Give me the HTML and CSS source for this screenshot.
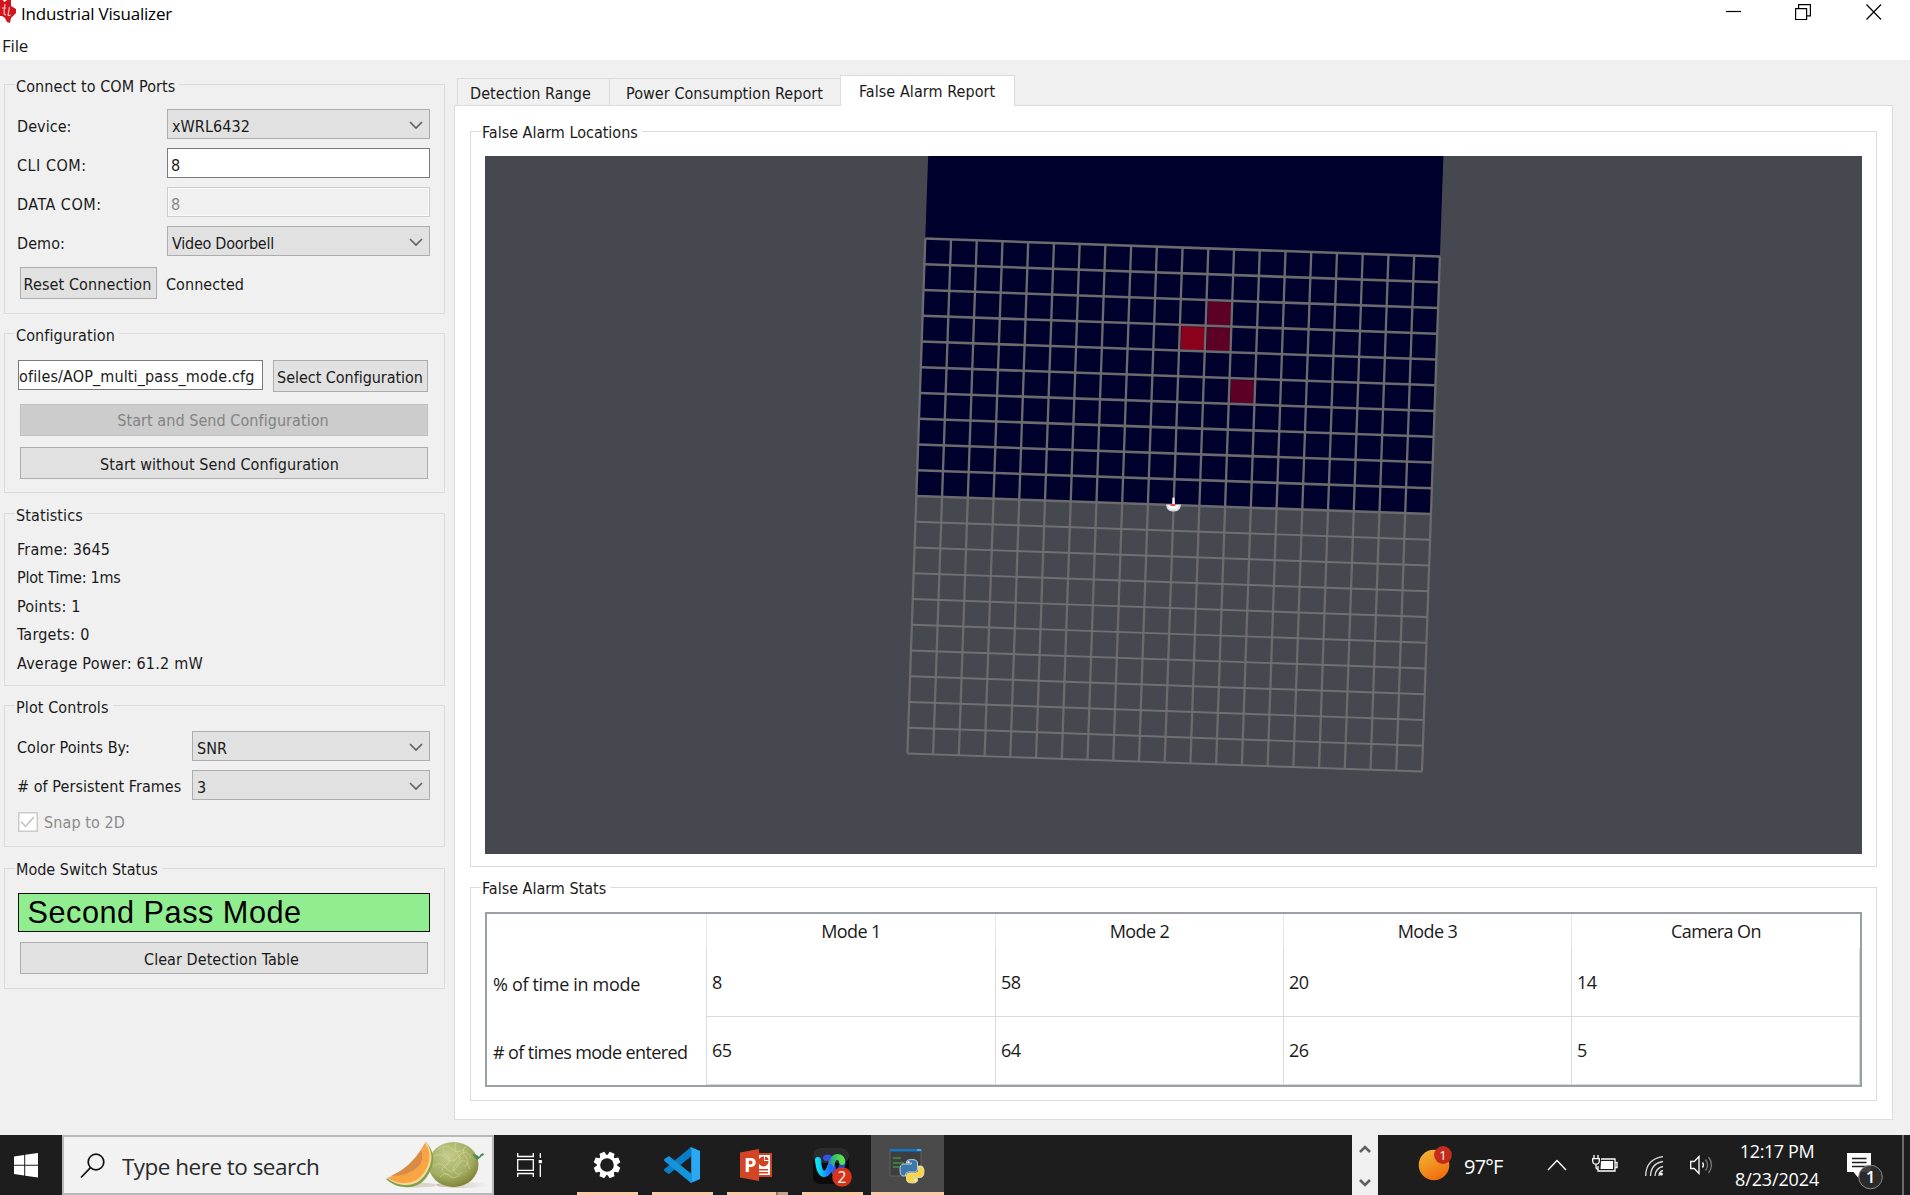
FILE: index.html
```html
<!DOCTYPE html>
<html lang="en">
<head>
<meta charset="utf-8">
<title>Industrial Visualizer</title>
<link rel="stylesheet" href="styles.css">
</head>
<body>
<header class="titlebar">
  <svg class="logo" width="17" height="25" viewBox="0 0 17 25"><path d="M0 1h3l1 2 2-1 1-1h4v6l5 3v4l-3 3-2 2-1 5-3-1-2-4-3-2H0z" fill="#d2141c"/><path d="M5 5l-1 8q0 3 2 3M2 9h4M9.500 8l-1.500 8q1 1.500 2.500-.5" fill="none" stroke="#f6c4c6" stroke-width="1.200"/></svg>
  <span class="title">Industrial Visualizer</span>
  <svg class="winctl" width="156" height="16" viewBox="0 0 156 16" fill="none" stroke="#000" stroke-width="1.2"><path d="M0 7.5h15"/><path d="M69.6 4.600h11v11h-11zM72.6 4.600v-4h11.800v11.200h-3.500"/><path d="M140.500.5l14.500 15M155 .5l-14.500 15"/></svg>
</header>
<nav class="menubar"><span>File</span></nav>

<main class="workspace">
  <aside class="sidebar">
    <section class="group ports">
      <h2>Connect to COM Ports</h2>
      <div class="form">
        <label>Device:</label><div class="select"><span>xWRL6432</span><svg width="14" height="9" viewBox="0 0 14 9"><path d="M1 1l6 6 6-6"/></svg></div>
        <label class="wide">CLI COM:</label><div class="input">8</div>
        <label class="wide">DATA COM:</label><div class="input disabled">8</div>
        <label>Demo:</label><div class="select"><span class="tight">Video Doorbell</span><svg width="14" height="9" viewBox="0 0 14 9"><path d="M1 1l6 6 6-6"/></svg></div>
      </div>
      <div class="reset"><div class="button">Reset Connection</div><span>Connected</span></div>
    </section>

    <section class="group config">
      <h2>Configuration</h2>
      <div class="file"><div class="input path"><span>ofiles/AOP_multi_pass_mode.cfg</span></div><div class="button">Select Configuration</div></div>
      <div class="button full off">Start and Send Configuration</div>
      <div class="button full without">Start without Send Configuration</div>
    </section>

    <section class="group stats">
      <h2>Statistics</h2>
      <ul><li>Frame: 3645</li><li class="time">Plot Time: 1ms</li><li>Points: 1</li><li>Targets: 0</li><li>Average Power: 61.2 mW</li></ul>
    </section>

    <section class="group plot">
      <h2>Plot Controls</h2>
      <div class="form">
        <label>Color Points By:</label><div class="select"><span>SNR</span><svg width="14" height="9" viewBox="0 0 14 9"><path d="M1 1l6 6 6-6"/></svg></div>
        <label># of Persistent Frames</label><div class="select"><span>3</span><svg width="14" height="9" viewBox="0 0 14 9"><path d="M1 1l6 6 6-6"/></svg></div>
      </div>
      <div class="check"><svg width="20" height="20" viewBox="0 0 20 20"><path d="M.75.75h18.500v18.500H.75z" fill="#fff" stroke="#cbcbcb" stroke-width="1.500"/><path d="M3 9.500l4.500 5L16 5" fill="none" stroke="#c0c0c0" stroke-width="1.500"/></svg><span>Snap to 2D</span></div>
    </section>

    <section class="group mode">
      <h2>Mode Switch Status</h2>
      <div class="status">Second Pass Mode</div>
      <div class="button full">Clear Detection Table</div>
    </section>
  </aside>

  <section class="content">
    <div class="tabs"><div class="tab t1">Detection Range</div><div class="tab t2">Power Consumption Report</div><div class="tab t3 active">False Alarm Report</div></div>
    <div class="pane">
      <section class="group locations">
        <h2>False Alarm Locations</h2>
        <svg class="scene" width="1377" height="698" viewBox="485 156 1377 698">
          <g transform="matrix(25.730 .9 -.895 25.750 925.300 238.500)">
            <path d="M0-5h20v15H0z" fill="#00002d"/>
            <path d="M11.060 2.060h.9v.9h-.9zM11.060 3.060h.9v.9h-.9zM12.060 5.060h.9v.9h-.9z" fill="#5d0025"/>
            <path d="M10.060 3.060h.9v.9h-.9z" fill="#8b001b"/>
            <g fill="none" stroke="#6b6b6e">
              <path stroke-width=".09" d="M0 0v20M1 0v20M2 0v20M3 0v20M4 0v20M5 0v20M6 0v20M7 0v20M8 0v20M9 0v20M10 0v20M11 0v20M12 0v20M13 0v20M14 0v20M15 0v20M16 0v20M17 0v20M18 0v20M19 0v20M20 0v20"/>
              <path stroke-width=".1" d="M0 0h20M0 1h20M0 2h20M0 3h20M0 4h20M0 5h20M0 6h20M0 7h20M0 8h20M0 9h20M0 10h20"/>
              <path stroke-width=".075" stroke="#707073" d="M0 11h20M0 12h20M0 13h20M0 14h20M0 15h20M0 16h20M0 17h20M0 18h20M0 19h20M0 20h20"/>
            </g>
          </g>
          <path d="M1166 504.500h6.200l.5-7h1.600l.5 7h6.200q-.5 7-7.500 7t-7.500-7z" fill="#dedee6"/>
          <path d="M1168 505h11l-2 4h-7zM1172.600 498h1.800v8h-1.800z" fill="#fff"/>
          <path d="M1170.500 504h5v2h-5z" fill="#f04a4a"/>
        </svg>
      </section>
      <section class="group report">
        <h2>False Alarm Stats</h2>
        <table>
          <colgroup><col class="c0"><col class="c1"><col class="c2"><col class="c3"><col class="c4"></colgroup>
          <tr class="head"><th></th><th>Mode 1</th><th>Mode 2</th><th>Mode 3</th><th>Camera On</th></tr>
          <tr><th class="tlabel first">% of time in mode</th><td>8</td><td>58</td><td>20</td><td>14</td></tr>
          <tr><th class="tlabel"># of times mode entered</th><td>65</td><td>64</td><td>26</td><td>5</td></tr>
        </table>
      </section>
    </div>
  </section>
</main>

<footer class="taskbar">
  <div class="start"><svg width="24" height="25" viewBox="0 0 24 25"><path d="M0 3.500l10.200-1.500v9.700H0zM11.200 1.800L24 0v11.700H11.200zM0 12.700h10.200v9.700L0 21.100zM11.200 12.700H24V24.500l-12.800-1.800z" fill="#fff"/></svg></div>
  <div class="search">
    <svg width="26" height="26" viewBox="0 0 26 26" fill="none" stroke="#111" stroke-width="1.700"><circle cx="16" cy="9" r="7.800"/><path d="M10.500 14.700L1 24.500"/></svg>
    <span>Type here to search</span>
    <svg class="melon" width="104" height="50" viewBox="384 1141 104 50">
      <defs>
        <radialGradient id="rind" cx=".4" cy=".3" r=".8"><stop offset="0" stop-color="#c3cc8a"/><stop offset=".6" stop-color="#a3ac61"/><stop offset="1" stop-color="#707226"/></radialGradient>
        <linearGradient id="flesh" x1="0" y1="0" x2="1" y2="1"><stop offset="0" stop-color="#f0a04e"/><stop offset="1" stop-color="#ffa63e"/></linearGradient>
        <linearGradient id="shade"><stop offset="0" stop-color="#c9bdb0"/><stop offset="1" stop-color="#f2f2f2"/></linearGradient>
      </defs>
      <ellipse cx="462" cy="1186" rx="26" ry="3" fill="url(#shade)"/><ellipse cx="416" cy="1186" rx="20" ry="2.500" fill="#dcd3cb"/>
      <ellipse cx="453.500" cy="1165.500" rx="25" ry="22.500" fill="url(#rind)"/>
      <g fill="none" stroke="#dfe0a4" stroke-width=".9" opacity=".55"><path d="M438 1150q8-6 14 0t14-2M434 1158q6-6 12 1t13-2 12 2M433 1168q7-7 13 1t12-3 12 4M440 1178q5-6 10-1t12-4M444 1147q-3 6 3 10t-2 10 4 9M456 1144q-3 6 2 11t-2 10 3 11M465 1148q-4 5 1 10t-2 10"/></g>
      <path d="M472 1155q6 1 7 3 1-3 4-4l1 2q-3 1-4 3l-3 2z" fill="#4b8a59"/>
      <path d="M426 1143Q437 1155 431 1170Q423 1190 404 1188Q393 1187 386 1180Q411 1170 426 1143z" fill="#7fa34a"/>
      <path d="M426 1143Q435 1155 429 1169Q421 1187 404 1186Q394 1185 387 1179Q411 1170 426 1143z" fill="#f7d79a"/>
      <path d="M425 1144Q433 1155 427 1168Q420 1184 404 1184Q395 1184 388 1179Q411 1170 425 1144z" fill="url(#flesh)"/>
      <path d="M421 1151Q425 1160 418 1168Q408 1177 391 1177Q411 1168 421 1151z" fill="#d98a45"/>
    </svg>
  </div>
  <div class="item view"><svg width="26" height="24" viewBox="0 0 26 24" fill="none" stroke="#fff" stroke-width="1.300"><path d="M.7 0v3.500h15.600V0M.7 6.700h15.600v10.600H.7zM.7 24v-3.500h15.600V24M23.300 0v5M23.300 11.500V24"/><path d="M21.700 7h3.200v3.200h-3.200z" fill="#fff" stroke="none"/></svg></div>
  <div class="item app gear"><svg width="28" height="28" viewBox="-14 -14 28 28"><g fill="#fff"><circle r="10.200"/><path d="M-2.600-13.300h5.200l1 5h-7.200zM-2.600 13.300h5.200l1-5h-7.200z" transform="rotate(22.500)"/><path d="M-2.600-13.300h5.200l1 5h-7.200zM-2.600 13.300h5.200l1-5h-7.200z" transform="rotate(67.500)"/><path d="M-2.600-13.300h5.200l1 5h-7.200zM-2.600 13.300h5.200l1-5h-7.200z" transform="rotate(112.500)"/><path d="M-2.600-13.300h5.200l1 5h-7.200zM-2.600 13.300h5.200l1-5h-7.200z" transform="rotate(157.500)"/></g><circle r="6.800" fill="#1d1d1d"/></svg></div>
  <div class="item app"><svg width="36" height="36" viewBox="0 0 36 36"><path d="M27 0l9 4v28l-9 4V9.500L5 27l-4-2.500q-2-1.500 0-3z" fill="#0a7dc8"/><path d="M1 11.500L5 9l22 17.500V36L1 14.500q-2-1.500 0-3z" fill="#1593dd"/><path d="M26 0l10 4v28l-10 4q1.500-1 1.500-3V3q0-2-1.500-3z" fill="#2aa9f2"/></svg></div>
  <div class="item app ppt"><svg width="32" height="32" viewBox="0 0 32 32"><path d="M17 4h15v24H17z" fill="#d04424"/><path d="M17 6h13v20H17z" fill="#fff"/><circle cx="23.500" cy="12.500" r="5" fill="#d04424"/><path d="M24 6.500v5.500h5.500v-5.500z" fill="#fff"/><path d="M25 7.500v3.500h3.500q0-3-3.500-3.500zM19 20h9v1.500h-9zM19 23h9v1.500h-9z" fill="#d04424"/><path d="M0 3.500L19 0v32L0 28.500z" fill="#d24625"/><text x="4" y="22.500" class="pp">P</text></svg></div>
  <div class="item app"><svg width="40" height="40" viewBox="0 0 40 40"><defs><linearGradient id="wx"><stop offset="0" stop-color="#0fe0f0"/><stop offset="1" stop-color="#1a6cff"/></linearGradient><linearGradient id="wg"><stop offset="0" stop-color="#2a55e8"/><stop offset=".6" stop-color="#35c56b"/><stop offset="1" stop-color="#5ee04a"/></linearGradient></defs><rect x="1" y="1" width="36" height="36" rx="7" fill="#0b0b0c"/><rect x="1" y="1" width="36" height="15" rx="7" fill="#2c2c2e"/><g fill="none" stroke-width="6" stroke-linecap="round"><path d="M30 13q2 2-1 8t-6 5" stroke="#1e49c8"/><path d="M14 11q5-2 6 6t4 9" stroke="#3a4fe8"/><path d="M12 27q5-1 7-9 2-8 6-8 5 0 5 5" stroke="url(#wg)"/><path d="M6 13q1 13 6 14 4 0 6-7" stroke="url(#wx)"/></g><circle cx="30" cy="30" r="9.800" fill="#d8341c"/><text x="30" y="35.500" class="num" text-anchor="middle">2</text></svg></div>
  <div class="item app py"><svg width="36" height="36" viewBox="0 0 36 36"><path d="M1 2h31v26H1z" fill="#3c3e40" stroke="#606060"/><path d="M1 1h32v2.500H1z" fill="#1477c9"/><path d="M28 2h4" stroke="#9cf"/><path d="M4 10h8M4 15h11M4 19h7" stroke="#3b9440" stroke-width="1.400"/><g stroke="#e8e8e8" stroke-width=".8"><path d="M22.500 11.500q6 0 6 3.500v6q0 3-3 3h-6q-3 0-3 3v1h-2q-3.500 0-3.500-6t3.500-6h8v-1h-5v-1.500q0-2 5-2z" fill="#3d78ac"/><path d="M23.500 35q-6 0-6-3.500v-3.500q0-3 3-3h6q3 0 3-3v-4h2q3.500 0 3.500 5.500t-3.500 6h-8v1h5v1.500q0 3-5 3z" fill="#fbd63f"/></g><circle cx="19.500" cy="14" r="1" fill="#fff"/><circle cx="26.500" cy="32.300" r="1" fill="#fff"/></svg></div>
  <div class="scroller"><svg width="12" height="10" viewBox="0 0 12 10"><path d="M1 8l5-5 5 5"/></svg><svg width="12" height="10" viewBox="0 0 12 10"><path d="M1 2l5 5 5-5"/></svg></div>
  <div class="tray">
    <svg class="weather" width="36" height="38" viewBox="0 0 36 38"><defs><linearGradient id="sun" x1=".2" y1="0" x2=".7" y2="1"><stop offset="0" stop-color="#f0b535"/><stop offset="1" stop-color="#f26a0c"/></linearGradient></defs><circle cx="16" cy="21" r="15.300" fill="url(#sun)"/><circle cx="25" cy="11" r="8.900" fill="#c42b1c"/><text x="25" y="16" class="wnum" text-anchor="middle">1</text></svg>
    <span class="temp">97°F</span>
    <svg class="chev" width="20" height="12" viewBox="0 0 20 12" fill="none" stroke="#fff" stroke-width="1.400"><path d="M1 11l9-9.500 9 9.500"/></svg>
    <svg class="batt" width="26" height="20" viewBox="0 0 26 20" fill="none" stroke="#fff" stroke-width="1.300"><path d="M9 4h14v12H6v-5M23.700 7.500h1.300v5h-1.300"/><path d="M9 6h12v8H8.500z" fill="#fff" stroke="none"/><path d="M2 0v3.500M6 0v3.500M.7 3.700h6.600v2q0 3.500-3.300 3.500T.7 5.700zM4 9v3q0 2 2 2"/></svg>
    <svg class="wifi" width="19" height="20" viewBox="0 0 19 20" fill="none" stroke="#ddd" stroke-width="1.300"><path d="M.7 20Q1 3 18 .7M5.500 20Q6 7.500 18 5.500M10 20q.5-8 8-9.500" /><path d="M14 20q0-4.500 4-5.500" /><circle cx="16.300" cy="18" r="1.600" fill="#fff" stroke="none"/></svg>
    <svg class="vol" width="23" height="20" viewBox="0 0 23 20" fill="none" stroke="#fff" stroke-width="1.300"><path d="M.7 6.500h3.500L9 1.500v17l-4.800-5H.7z"/><path d="M12.500 7.500q2 2.500 0 5"/><path d="M15.500 4.500q4 5.500 0 11M18.500 2q6 8 0 16" stroke="#777"/></svg>
    <div class="clock"><span>12:17 PM</span><span class="date">8/23/2024</span></div>
    <svg class="note" width="36" height="40" viewBox="0 0 36 40"><path d="M0 1h24v19H14l-3 5.500L6.500 20H0z" fill="#fff"/><path d="M5 6.500h14.500M5 10.500h14.500M5 14.500h14.500" stroke="#1d1d1d" stroke-width="1.300"/><circle cx="23.500" cy="25" r="11.800" fill="#2d2d2d" fill-opacity=".9" stroke="#8c8c8c"/><text x="23.500" y="31" class="nnum" text-anchor="middle">1</text></svg>
  </div>
</footer>
</body>
</html>
```
FILE: styles.css
```css
* { box-sizing: border-box; margin: 0; padding: 0; }
body {
  width: 1910px; height: 1195px; overflow: hidden;
  display: flex; flex-direction: column;
  background: #f0f0f0; color: #1a1a1a;
  font: 16px/20px "DejaVu Sans Condensed", Tahoma, sans-serif;
  letter-spacing: .06px; white-space: nowrap;
}
svg { display: block; flex: none; }
h2 { font: inherit; }
ul { list-style: none; }

.titlebar { height: 28px; display: flex; background: #fff; color: #000; font: 17px/27px "Open Sans", sans-serif; letter-spacing: -.19px; }
.logo { margin: -1px 4px 0 0; }
.winctl { margin: 4px 28px 0 auto; }
.menubar { height: 32px; padding: 3px 0 0 2px; background: #fff; font: 17px/29px "Open Sans", sans-serif; letter-spacing: -.2px; }

.workspace { height: 1075px; display: flex; }
.sidebar { width: 454px; padding: 24px 0 0 4px; }
.group { border: 1px solid #dcdcdc; display: flex; flex-direction: column; }
.group h2 { width: fit-content; height: 20px; margin: -9px 0 0 10px; padding: 1px 4px 0 1px; background: #f0f0f0; }
.sidebar .group { width: 441px; padding: 0 14px 0 13px; }
.sidebar .group h2 { margin-left: -3px; letter-spacing: .1px; }
.sidebar .ports { height: 230px; }
.sidebar .config { height: 160px; margin-top: 19px; }
.sidebar .stats { height: 173px; margin-top: 20px; }
.sidebar .plot { height: 142px; margin-top: 19px; }
.sidebar .mode { height: 121px; margin-top: 21px; }
.sidebar .mode h2 { padding-top: 0; letter-spacing: 0; }

.form { display: grid; grid-template-columns: 149px 263px; grid-auto-rows: 30px; row-gap: 9px; margin-top: 13px; }
.form label { padding-top: 8px; margin-left: -1px; }
.form .wide { letter-spacing: .5px; }
.select { display: flex; justify-content: space-between; padding: 7px 6px 0 4px; border: 1px solid #adadad; background: #e1e1e1; }
.select svg { margin-top: 4px; fill: none; stroke: #606060; stroke-width: 1.6; }
.tight { letter-spacing: -.25px; }
.input { height: 30px; padding: 7px 0 0 3px; border: 1px solid #7a7a7a; background: #fff; }
.disabled { border-color: #ccc; background: #f0f0f0; color: #888; box-shadow: inset 0 0 0 1px #fafafa; }
.button { height: 32px; padding-top: 7px; border: 1px solid #adadad; background: #e1e1e1; text-align: center; }
.full { margin: 0 2px; padding-right: 2px; }
.off { padding-top: 6px; background: #ccc; border-color: #bfbfbf; color: #838383; }
.without { padding-right: 9px; }
.reset { display: flex; margin: 11px 0 0 2px; }
.reset .button { width: 137px; padding-right: 2px; letter-spacing: .1px; }
.reset span { margin: 8px 0 0 9px; }

.file { display: flex; gap: 10px; height: 32px; margin-top: 15px; }
.config .path { width: 245px; padding: 6px 0 0; overflow: hidden; letter-spacing: .13px; }
.file .button { width: 155px; padding: 7px 1px 0 0; letter-spacing: -.04px; }
.config .full { margin-top: 11.5px; }

.stats ul { margin: 11px 0 0 -1px; line-height: 28.4px; letter-spacing: .22px; }
.time { letter-spacing: -.25px; }
.plot .form { grid-template-columns: 174px 238px; margin-top: 14px; }
.plot .select, .plot label { padding-top: 7px; }
.check { display: flex; margin-top: 12px; color: #8a8a8a; }
.check span { margin: 1px 0 0 6px; letter-spacing: .1px; }
.status { height: 39px; margin-top: 13px; padding-left: 8.5px; border: 1.5px solid #111; background: #90ee90; color: #000; font: 30.7px/38px "Liberation Sans", Arial, sans-serif; letter-spacing: .5px; }
.mode .button { margin-top: 10px; padding-right: 5px; }

.content { width: 1439px; padding-top: 15px; }
.tabs { height: 31px; padding-left: 3px; display: flex; align-items: flex-end; }
.tab { height: 28px; padding: 5px 0 0 12px; border: 1px solid #dcdcdc; }
.t1 { width: 152px; border-right: 0; }
.t2 { width: 231px; padding-left: 16px; border-right: 0; }
.active { position: relative; width: 175px; height: 31px; padding: 6px 0 0 18px; border-bottom: 0; background: #fff; }
.pane { height: 1015px; margin-top: -1px; padding: 25px 15px 0; border: 1px solid #dcdcdc; background: #fff; }
.pane .group { height: 736px; padding: 0 14px; }
.pane .group h2 { margin-left: -4px; padding-top: 0; background: #fff; letter-spacing: 0; }
.scene { margin-top: 13px; background: #45484f; }
.pane .report { height: 214px; margin-top: 20px; }

table { width: 1377px; height: 175px; margin-top: 13px; border: 2px solid #9b9fa6; border-spacing: 0; table-layout: fixed; font: 18px/24px "Open Sans", sans-serif; letter-spacing: -.6px; }
th { font-weight: 400; }
.c0 { width: 220px; } .c1 { width: 289px; } .c2, .c3 { width: 288px; } .c4 { width: 288px; }
.head { height: 34px; }
td { padding-left: 5px; border: solid #dadada; border-width: 0 1px 1px 0; }
tr :nth-child(1) { border-right: 1px solid #dcdcdc; }
.head th { border-right: 1px solid #e8e8e8; }
.head th:last-child { border: 0; }
.tlabel { padding: 3px 0 0 6px; text-align: left; }
.first { letter-spacing: -.32px; }

.taskbar { height: 60px; display: flex; align-items: stretch; background: #1d1d1d; color: #fff; font-family: "Open Sans", sans-serif; }
.start { width: 62px; padding: 18px 0 0 14px; }
.search { width: 432px; display: flex; padding: 16px 0 0 16px; border: 2px solid #b9b9b9; background: #f2f2f2; color: #2b2b2b; font-size: 22.5px; line-height: 30px; letter-spacing: -.52px; }
.search span { width: 196px; margin: -1px 66px 0 16px; }
.melon { margin-top: -13px; }
.item { display: flex; justify-content: center; padding-top: 12px; }
.view { width: 72px; padding-top: 18px; }
.app { width: 61px; margin-left: 14px; padding-right: 1px; border-bottom: 3px solid #fbcba8; }
.gear { margin-left: 11px; padding-top: 16px; padding-right: 2px; }
.ppt { padding-top: 14px; padding-right: 3px; border-image: linear-gradient(90deg, #fbcba8 47px, #8f7768 47px 49px, #c9a38c 49px) 3; border-width: 0 0 3px; }
.py { width: 73px; margin-left: 8px; padding-top: 13px; background: #4a4a4a; }
.pp { font: 700 20px "Open Sans", sans-serif; fill: #fff; }
.num { font: 15.5px "Open Sans", sans-serif; fill: #fff; letter-spacing: 0; }
.wnum { font: 13px "Open Sans", sans-serif; fill: #fff; letter-spacing: 0; }
.nnum { font: 600 17px "Open Sans", sans-serif; fill: #fff; letter-spacing: 0; }
.scroller { width: 26px; margin-left: 408px; padding: 9px 7px 0; background: #f0f0f0; }
.scroller svg { fill: none; stroke: #606060; stroke-width: 2.6; }
.scroller svg + svg { margin-top: 24px; }
.tray { display: flex; width: 526px; padding-left: 40px; }
.weather { margin-top: 9px; }
.temp { width: 42px; margin: 18px 0 0 10px; font-size: 20px; line-height: 28px; letter-spacing: -.8px; }
.chev { margin: 24px 0 0 42px; }
.batt { margin: 20px 0 0 25px; }
.wifi { margin: 21px 0 0 27px; }
.vol { margin: 20px 0 0 26px; }
.clock { width: 85px; margin: 2px 0 0 22px; font-size: 18px; line-height: 28.2px; display: flex; flex-direction: column; align-items: center; letter-spacing: -.4px; }
.date { letter-spacing: -.14px; }
.note { margin: 17px 19px 0 28px; }
.tray::after { content: ""; width: 2px; height: 60px; background: #6a6a6a; }
```
